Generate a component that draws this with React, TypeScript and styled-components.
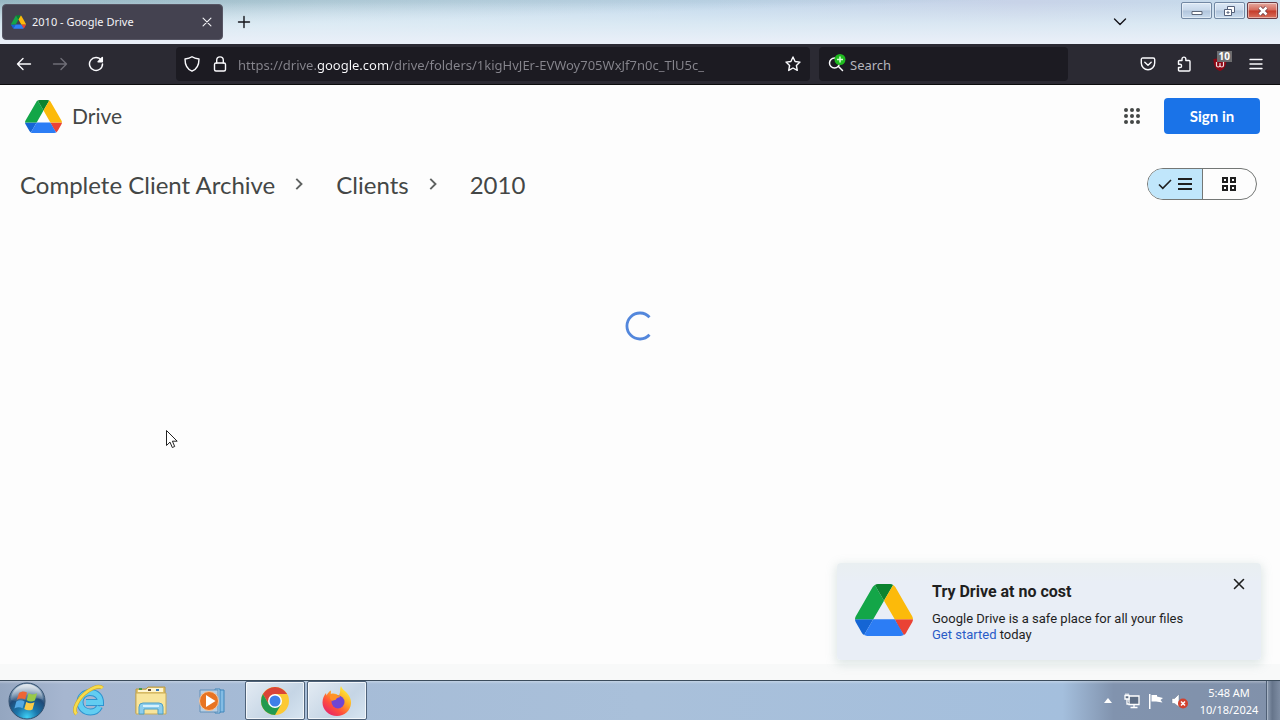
import React from "react";
import styled, { createGlobalStyle } from "styled-components";

const uiFont = `"Noto Sans", "Open Sans", sans-serif`;
const brandFont = `Lato, "Open Sans", sans-serif`;

const GlobalStyle = createGlobalStyle`
  *, *::before, *::after { box-sizing: border-box; }
  body { margin: 0; background: #fdfdfd; font-family: Roboto, sans-serif; }
  button { border: 0; padding: 0; background: none; color: inherit; font: inherit; cursor: default; }
  svg { display: block; flex: none; }
`;

const Screen = styled.div`
  display: flex;
  flex-direction: column;
  min-height: 100vh;
`;

/* Window title bar */
const TitleBar = styled.div`
  display: flex;
  align-items: flex-start;
  height: 44px;
  padding: 0 2px;
  background:
    linear-gradient(to bottom, rgba(228, 239, 247, 0) 5%, rgba(225, 238, 246, 0.75) 55%, #e9eff8 95%),
    linear-gradient(to bottom right, rgba(120, 160, 172, 0.6), rgba(120, 160, 172, 0) 40%),
    linear-gradient(to right, #c3d8e3, #d0e2ef 25%, #c4d9ec 55%, #c8d3e8 80%, #c6dcec);
`;

const Tab = styled.div`
  display: flex;
  align-items: center;
  width: 221px;
  height: 36px;
  margin-top: 4px;
  padding: 0 6px 0 8px;
  border: 1px solid #575664;
  border-radius: 4px;
  background: #444250;
  color: #f3f3f6;
`;

const TabTitle = styled.span`
  flex: 1;
  padding-left: 6px;
  font: 11px/16px ${uiFont};
`;

const IconButton = styled.button<{ $width?: number; $height?: number }>`
  display: flex;
  flex: none;
  align-items: center;
  justify-content: center;
  width: ${(p) => p.$width ?? 36}px;
  height: ${(p) => p.$height ?? 32}px;
`;

const TabTools = styled.div`
  display: flex;
  flex: 1;
  align-items: center;
  justify-content: space-between;
  height: 44px;
  padding: 0 43px 0 3px;
  color: #15141a;
`;

const WindowButtons = styled.div`
  display: flex;
  gap: 2px;
  padding-top: 2px;
`;

const WindowButton = styled.button<{ $close?: boolean }>`
  display: flex;
  align-items: center;
  justify-content: center;
  width: 31px;
  height: 17px;
  border: 1px solid ${(p) => (p.$close ? "#6b3a42" : "#7288a3")};
  border-radius: 2px;
  background: ${(p) =>
    p.$close
      ? "linear-gradient(#e5aaa0, #d5695a 48%, #c53a28 52%, #d9705c)"
      : "linear-gradient(#dce9f6, #c8d8ea 48%, #b1c5dc 52%, #c9dcee)"};
  box-shadow: inset 0 0 0 1px rgba(255, 255, 255, 0.45);
`;

/* Browser toolbar */
const Toolbar = styled.nav`
  display: flex;
  align-items: center;
  height: 41px;
  padding: 0 6px;
  border-bottom: 1px solid #0c0c0d;
  background: #2b2a33;
  color: #fbfbfe;
`;

const NavButtons = styled.div`
  display: flex;
  margin-right: 62px;
`;

const Field = styled.div`
  display: flex;
  align-items: center;
  height: 34px;
  border-radius: 4px;
  background: #1c1b22;
`;

const AddressField = styled(Field)`
  flex: 1;
  min-width: 0;
  padding: 0 3px 0 2px;
`;

const SearchField = styled(Field)`
  width: 249px;
  margin: 0 62px 0 9px;
  padding-left: 9px;
`;

const TextInput = styled.input`
  flex: 1;
  min-width: 0;
  height: 28px;
  padding: 2px 0 0 4px;
  border: 0;
  outline: 0;
  background: none;
  color: #fbfbfe;
  font: 13px/20px ${uiFont};
  &::placeholder { color: #b5b5bc; opacity: 1; }
`;

/* The host name is brighter than the rest of the address. */
const AddressInput = styled(TextInput)`
  background: linear-gradient(to right, #86858d 82px, #fbfbfe 82px, #fbfbfe 154px, #86858d 154px);
  background-clip: text;
  -webkit-background-clip: text;
  color: transparent;
`;

const Extension = styled(IconButton)`
  position: relative;
`;

const Badge = styled.span`
  position: absolute;
  top: 3px;
  right: 6px;
  padding: 0 2px;
  background: #6d6d6f;
  color: #fff;
  font: bold 10px/11px ${uiFont};
`;

/* Drive page */
const Page = styled.main`
  position: relative;
  display: flex;
  flex: 1;
  flex-direction: column;
  background: linear-gradient(to top, #f8f9f9 16px, #fdfdfd 16px);
`;

const Header = styled.header`
  display: flex;
  align-items: center;
  height: 62px;
  padding: 0 20px 0 25px;
`;

const Brand = styled.a`
  display: flex;
  align-items: center;
  gap: 10px;
  color: #444746;
  font: 21px/28px ${brandFont};
  text-decoration: none;
`;

const HeaderActions = styled.div`
  display: flex;
  align-items: center;
  gap: 14px;
  margin-left: auto;
`;

const SignIn = styled.a`
  width: 96px;
  border-radius: 4px;
  background: #1a73e8;
  color: #fff;
  font: bold 15px/36px ${brandFont};
  text-align: center;
  text-decoration: none;
`;

const PathBar = styled.div`
  display: flex;
  align-items: center;
  justify-content: space-between;
  height: 74px;
  padding: 0 23px 0 20px;
`;

const Crumbs = styled.ol`
  display: flex;
  align-items: center;
  margin: 0;
  padding: 2px 0 0;
  list-style: none;
`;

const Crumb = styled.li`
  display: flex;
  align-items: center;
  color: #444746;
  font: 24px/32px ${brandFont};
  a { color: inherit; text-decoration: none; }
  svg { margin: 0 25px 2px 12px; }
`;

const ViewToggle = styled.div`
  display: flex;
  height: 32px;
  overflow: hidden;
  border: 1px solid #747775;
  border-radius: 16px;
  color: #1f1f1f;
`;

const ViewOption = styled.button<{ $selected?: boolean }>`
  display: flex;
  align-items: center;
  justify-content: center;
  gap: 6px;
  width: ${(p) => (p.$selected ? 55 : 53)}px;
  padding-right: 1px;
  border-right: ${(p) => (p.$selected ? "1px solid #747775" : "0")};
  background: ${(p) => (p.$selected ? "#c0e6fb" : "transparent")};
`;

const Loading = styled.div`
  display: flex;
  justify-content: center;
  padding: 90px 2px 0 0;
`;

const Toast = styled.aside`
  position: absolute;
  right: 19px;
  bottom: 20px;
  display: flex;
  width: 424px;
  padding: 13px 14px 17px 18px;
  border-radius: 4px;
  background: linear-gradient(#e9eff1, #e9eef6 20%, #e9eef6);
  box-shadow: 0 3px 10px 2px rgba(150, 180, 175, 0.28);
  color: #1f1f1f;
`;

const ToastText = styled.div`
  flex: 1;
  padding: 6px 0 0 19px;
  h2 { margin: 0 0 9px; font: bold 16px/20px Roboto, sans-serif; }
  p { margin: 0; font: 13px/16px Roboto, sans-serif; }
  a { color: #2a5bc7; text-decoration: none; }
`;

const LogoSlot = styled.div`
  padding-top: 8px;
`;

const Pointer = styled.svg`
  position: absolute;
  top: 344px;
  left: 165px;
`;

/* Taskbar */
const Taskbar = styled.footer`
  display: flex;
  height: 40px;
  border-top: 1px solid #3b4c5c;
  background:
    linear-gradient(to bottom, rgba(255, 255, 255, 0.3), rgba(255, 255, 255, 0) 3px),
    linear-gradient(to right, #94a6c0, #a6b6d0 5%, #a5bbd6 20%, #a9c0da 50%, #a4bfdd 83%, #8193ae 87%, #8191aa);
`;

const Start = styled(IconButton)`
  margin-right: 5px;
`;

const Tasks = styled.div`
  display: flex;
  gap: 2px;
`;

const Task = styled.button<{ $open?: boolean }>`
  display: flex;
  align-items: center;
  justify-content: center;
  width: 60px;
  height: 39px;
  border: 1px solid ${(p) => (p.$open ? "#4e6279" : "transparent")};
  border-radius: 2px;
  background: ${(p) => (p.$open ? "linear-gradient(135deg, #e3ebf3, #c5d5e5 60%, #d7e5f1)" : "none")};
  box-shadow: ${(p) => (p.$open ? "inset 0 0 0 1px rgba(255, 255, 255, 0.7)" : "none")};
`;

const Tray = styled.div`
  display: flex;
  align-items: center;
  margin-left: auto;
  color: #fff;
`;

const Clock = styled.time`
  width: 70px;
  margin: 0 2px;
  font: 11px/17px ${uiFont};
  text-align: center;
`;

const ShowDesktop = styled.button`
  width: 14px;
  height: 39px;
  border-left: 1px solid #4f5f75;
  background: linear-gradient(to right, #8e9db2, #66758b 40%, #7e8da3);
  box-shadow: inset 1px 0 0 #a7b4c5;
`;

const DriveLogo = ({ width, height }: { width: number; height: number }) => (
  <svg width={width} height={height} viewBox="0 0 87.3 78" aria-hidden="true">
    <path d="m6.6 66.85 3.85 6.65c.8 1.4 1.95 2.5 3.3 3.3l13.75-23.8h-27.5c0 1.55.4 3.1 1.2 4.5z" fill="#1565d4" />
    <path d="m43.65 25-13.75-23.8c-1.35.8-2.5 1.9-3.3 3.3l-25.4 44a9.06 9.06 0 0 0-1.2 4.5h27.5z" fill="#13a648" />
    <path d="m73.55 76.8c1.35-.8 2.5-1.9 3.3-3.3l1.6-2.75 7.65-13.25c.8-1.4 1.2-2.95 1.2-4.5h-27.5l5.85 11.5z" fill="#ea4335" />
    <path d="m43.65 25 13.75-23.8c-1.35-.8-2.9-1.2-4.5-1.2h-18.5c-1.6 0-3.15.45-4.5 1.2z" fill="#0b832f" />
    <path d="m59.8 53h-32.3l-13.75 23.8c1.35.8 2.9 1.2 4.5 1.2h50.8c1.6 0 3.15-.45 4.5-1.2z" fill="#2c7df5" />
    <path d="m73.4 26.5-12.7-22c-.8-1.4-1.95-2.5-3.3-3.3l-13.75 23.8 16.15 28h27.45c0-1.55-.4-3.1-1.2-4.5z" fill="#fcba0a" />
  </svg>
);

type StrokeProps = { size?: number; width?: number; color?: string; children: React.ReactNode };
const Stroke = ({ size = 16, width = 1.4, color = "currentColor", children }: StrokeProps) => (
  <svg width={size} height={size} viewBox="0 0 16 16" fill="none" stroke={color} strokeWidth={width} strokeLinecap="round" strokeLinejoin="round" aria-hidden="true">
    {children}
  </svg>
);

const Chevron = () => (
  <svg width="24" height="24" viewBox="0 0 24 24" fill="none" stroke="#5f6261" strokeWidth="1.9" aria-hidden="true">
    <path d="m9.3 6.8 5.2 5.2-5.2 5.2" />
  </svg>
);

const StartOrb = () => (
  <svg width="38" height="38" viewBox="0 0 38 38" aria-hidden="true">
    <defs>
      <radialGradient id="orb" cx="50%" cy="95%" r="85%">
        <stop offset="0" stopColor="#3fd0f5" />
        <stop offset=".35" stopColor="#1b77ac" />
        <stop offset=".7" stopColor="#1f4a78" />
        <stop offset="1" stopColor="#8aa4bd" />
      </radialGradient>
      <linearGradient id="gloss" x1="0" y1="0" x2="0" y2="1">
        <stop offset="0" stopColor="#fff" stopOpacity=".75" />
        <stop offset="1" stopColor="#fff" stopOpacity=".1" />
      </linearGradient>
    </defs>
    <circle cx="19" cy="19" r="18" fill="url(#orb)" stroke="#34506e" />
    <path d="M3 18a16 16 0 0 1 32 0c-9-5-22 4-32 0z" fill="url(#gloss)" />
    <path d="M11 11c3-2 5-2 8-.4l-1.800 7c-3-1.600-5.500-1.500-8.400.2z" fill="#ee6535" />
    <path d="M20.500 11.300c3 1.500 5.500 1.400 8.600 0l-2.200 7.200c-3 1.500-5.300 1.300-8.200-.2z" fill="#98c94a" />
    <path d="M8.300 19.600c3-1.700 5.300-1.600 8.300-.2l-2 6.800c-2.800-1.300-5.200-1.200-8.200.2z" fill="#53a8e4" />
    <path d="M18.200 20c3 1.500 5.300 1.600 8.300.2l-2 7.200c-3 1.400-5.300 1.200-8.200-.4z" fill="#fbcb46" />
  </svg>
);

const ExplorerE = () => (
  <svg width="34" height="34" viewBox="0 0 34 34" fill="none" aria-hidden="true">
    <path d="M27.500 22.500C25.800 26 22.500 28 18.500 28C12.500 28 8 23.800 8 18C8 12.500 12.500 8.500 18 8.500C24.500 8.500 28.500 12.500 28.500 18.500H14" stroke="#2f93cf" strokeWidth="7" />
    <path d="M27.500 22.500C25.800 26 22.500 28 18.500 28C12.500 28 8 23.800 8 18C8 12.500 12.500 8.500 18 8.500C24.500 8.500 28.500 12.500 28.500 18.500H14" stroke="#62cdf1" strokeWidth="5" />
    <path d="M4.500 30C0 26 6 14 16 7c6-4 12-5.500 14.500-3" stroke="#cfa92a" strokeWidth="3.800" />
    <path d="M4.500 30C0 26 6 14 16 7c6-4 12-5.500 14.500-3" stroke="#f7dc4d" strokeWidth="2.600" />
  </svg>
);

const FolderIcon = () => (
  <svg width="34" height="32" viewBox="0 0 34 32" aria-hidden="true">
    <path d="M2 4h10l2-2h17v26H2z" fill="#e5c96c" stroke="#b7984a" />
    <path d="M4 5h8l2-2h15v4H4z" fill="#fff5cf" />
    <path d="M5 3h3v2H5z" fill="#479b4c" /><path d="M14 4h3v2h-3z" fill="#6b513a" /><path d="M22 4h3v2h-3z" fill="#3b7ab8" />
    <path d="M2 8h30v21H2z" fill="#f8e59c" stroke="#c9ab59" />
    <path d="M5 29v-7q0-4 4-4h16q4 0 4 4v7h-5v-5H10v5z" fill="#8ccdec" stroke="#4f9fc6" />
    <path d="M9 21h16" stroke="#d7f1fc" strokeWidth="2" />
  </svg>
);

const MediaIcon = () => (
  <svg width="30" height="28" viewBox="0 0 30 28" aria-hidden="true">
    <path d="M21 3h5v22h-5z" fill="#83bce4" stroke="#3e86bb" />
    <path d="M17 2h5v24h-5z" fill="#b9dcf3" stroke="#3e86bb" />
    <path d="M2 3h18v22H2z" fill="#b7cfe5" stroke="#6390b8" />
    <circle cx="11" cy="14" r="9.500" fill="#e77423" stroke="#f6c59c" />
    <path d="m8 8 9.500 6L8 20z" fill="#fff" />
  </svg>
);

const ChromeIcon = () => (
  <svg width="30" height="30" viewBox="0 0 30 30" aria-hidden="true">
    <circle cx="15" cy="15" r="14" fill="#fcc934" />
    <path d="M2.900 8A14 14 0 0 1 27.100 8H15L9 18.500z" fill="#da4437" />
    <path d="M2.900 8A14 14 0 0 0 15 29l6-10.500H9z" fill="#229a50" />
    <circle cx="15" cy="15" r="7" fill="#fff" />
    <circle cx="15" cy="15" r="5.500" fill="#3f7fe8" />
  </svg>
);

const FirefoxIcon = () => (
  <svg width="32" height="32" viewBox="0 0 32 32" aria-hidden="true">
    <defs>
      <linearGradient id="fox" x1=".85" y1=".1" x2=".2" y2=".95">
        <stop offset="0" stopColor="#fff03d" />
        <stop offset=".35" stopColor="#ffab22" />
        <stop offset=".7" stopColor="#ff4d3d" />
        <stop offset="1" stopColor="#e62669" />
      </linearGradient>
    </defs>
    <path d="M20 1c1 3 3 4 5 6 3 3 5.500 7 5 11.500C29.300 26 23.500 31 16 31 8 31 1.500 25 1.500 17.500c0-4 1.500-7 3.500-9.500l.5 2.500C7 8 8 6.500 10 5.500L9.800 9c3-1 6 0 7.700 1.500C20 8.500 18.500 4 20 1z" fill="url(#fox)" />
    <circle cx="17" cy="17" r="6.500" fill="#7046d3" />
    <path d="M9.500 10c2.500-1.500 5-.8 6.500.6 2 0 3 .6 3.300 1.500-2.600.4-4 1.200-4.500 2.700-2 .6-2.800 1.200-4.500.6-1.500-1.200-1.800-3.400-.8-5.400z" fill="#ff9126" />
  </svg>
);

const appDots = [3, 9, 15];

export default function App() {
  return (
    <Screen>
      <GlobalStyle />
      <TitleBar>
        <Tab>
          <DriveLogo width={15} height={14} />
          <TabTitle>2010 - Google Drive</TabTitle>
          <IconButton $width={18} $height={18} aria-label="Close tab">
            <Stroke size={14} width={1.3}><path d="m3.500 3.500 9 9m0-9-9 9" /></Stroke>
          </IconButton>
        </Tab>
        <TabTools>
          <IconButton aria-label="New tab"><Stroke><path d="M8 2.500v11M2.500 8h11" /></Stroke></IconButton>
          <IconButton aria-label="List all tabs"><Stroke><path d="m2.500 5 5.500 5.500L13.500 5" /></Stroke></IconButton>
        </TabTools>
        <WindowButtons>
          <WindowButton aria-label="Minimize">
            <svg width="12" height="8" viewBox="0 0 12 8"><path d="M1 4.500h10v3H1z" fill="#fff" stroke="#5b6577" /></svg>
          </WindowButton>
          <WindowButton aria-label="Restore">
            <svg width="13" height="12" viewBox="0 0 13 12" fill="#fff" stroke="#55617a"><path d="M4.500 1.500h7v6h-7z" /><path d="M1.500 4.500h7v6h-7z" /><path d="M4 7h2v1H4z" /></svg>
          </WindowButton>
          <WindowButton aria-label="Close" $close>
            <svg width="12" height="10" viewBox="0 0 12 10" fill="none"><path d="m2.500 1.500 7 7m0-7-7 7" stroke="#6b3a42" strokeWidth="4" /><path d="m2.500 1.500 7 7m0-7-7 7" stroke="#fff" strokeWidth="2.500" /></svg>
          </WindowButton>
        </WindowButtons>
      </TitleBar>

      <Toolbar aria-label="Browser">
        <NavButtons>
          <IconButton aria-label="Back"><Stroke><path d="M14.500 8h-13M7 2.500 1.500 8 7 13.500" /></Stroke></IconButton>
          <IconButton aria-label="Forward"><Stroke color="#6f6e77"><path d="M1.500 8h13M9 2.500 14.500 8 9 13.500" /></Stroke></IconButton>
          <IconButton aria-label="Reload"><Stroke width={1.500}><path d="M13.300 4.200A6.500 6.500 0 1 0 14.500 8" /><path d="M14.300 1.500v4.200h-4.200z" fill="currentColor" /></Stroke></IconButton>
        </NavButtons>
        <AddressField>
          <IconButton $width={28} aria-label="Tracking protection">
            <Stroke><path d="M8 .8c2 1.500 4.500 2 7 2.200 0 5.500-1.500 10-7 12.200C2.500 13 1 8.500 1 3c2.500-.2 5-.7 7-2.200z" /></Stroke>
          </IconButton>
          <IconButton $width={28} aria-label="Site information">
            <Stroke><rect x="2.500" y="7" width="11" height="8" rx="1.500" /><path d="M4.700 7V4.200a3.300 3.300 0 0 1 6.600 0V7" /></Stroke>
          </IconButton>
          <AddressInput aria-label="Address" defaultValue="https://drive.google.com/drive/folders/1kigHvJEr-EVWoy705WxJf7n0c_TlU5c_" />
          <IconButton $width={28} aria-label="Bookmark this page">
            <Stroke><path d="m8 1 2.100 4.500 4.900.6-3.600 3.400.9 4.900L8 12l-4.300 2.400.9-4.900L1 6.100l4.900-.6z" /></Stroke>
          </IconButton>
        </AddressField>
        <SearchField>
          <svg width="18" height="20" viewBox="0 0 18 20" fill="none" aria-hidden="true">
            <circle cx="6.500" cy="9" r="5" stroke="#fbfbfe" strokeWidth="1.500" />
            <path d="m10.500 12.500 4 4" stroke="#fbfbfe" strokeWidth="1.500" strokeLinecap="round" />
            <circle cx="12" cy="5.500" r="5.500" fill="#20bc20" />
            <path d="M12 2.500v6M9 5.500h6" stroke="#d8ffd8" strokeWidth="1.500" />
          </svg>
          <TextInput aria-label="Search the web" placeholder="Search" />
        </SearchField>
        <IconButton aria-label="Save to Pocket">
          <Stroke><path d="M2.800 2h10.400q1.500 0 1.500 1.500V7a6.700 6.700 0 0 1-13.400 0V3.500Q1.300 2 2.800 2z" /><path d="M4.800 6.200 8 9.200l3.200-3" /></Stroke>
        </IconButton>
        <IconButton aria-label="Extensions">
          <Stroke><path d="M6 4.500V3a1.900 1.900 0 0 1 3.800 0v1.500H13q1 0 1 1V14q0 1-1 1H3.500q-1 0-1-1v-2.500H4a1.600 1.600 0 0 0 0-3.200H2.500V5.500q0-1 1-1z" /></Stroke>
        </IconButton>
        <Extension aria-label="Content blocker">
          <svg width="16" height="16" viewBox="0 0 16 16" aria-hidden="true">
            <path d="M8 1c2 1.300 4 1.800 6.500 2 0 6-1.500 10-6.500 12C3 13 1.500 9 1.500 3 4 2.800 6 2.300 8 1z" fill="#8d0714" />
            <path d="M4.500 6v3.500q0 1.500 1.700 1.500T8 9.500V7v2.500Q8 11 9.700 11t1.800-1.500V6" fill="none" stroke="#f3dfe1" strokeWidth="1.200" />
          </svg>
          <Badge>10</Badge>
        </Extension>
        <IconButton aria-label="Menu"><Stroke><path d="M2 3.500h12M2 8h12M2 12.500h12" /></Stroke></IconButton>
      </Toolbar>

      <Page>
        <Header>
          <Brand href="#drive"><DriveLogo width={37} height={33} />Drive</Brand>
          <HeaderActions>
            <IconButton aria-label="Google apps">
              <svg width="18" height="18" viewBox="0 0 18 18" fill="#444746">
                {appDots.map((y) => appDots.map((x) => <circle key={`${x}-${y}`} cx={x} cy={y} r="2" />))}
              </svg>
            </IconButton>
            <SignIn href="#signin">Sign in</SignIn>
          </HeaderActions>
        </Header>
        <PathBar>
          <Crumbs>
            <Crumb><a href="#archive">Complete Client Archive</a><Chevron /></Crumb>
            <Crumb><a href="#clients">Clients</a><Chevron /></Crumb>
            <Crumb aria-current="page">2010</Crumb>
          </Crumbs>
          <ViewToggle role="group" aria-label="Layout">
            <ViewOption $selected aria-pressed="true" aria-label="List layout">
              <svg width="14" height="12" viewBox="0 0 14 12" fill="none" stroke="#1f1f1f" strokeWidth="1.600"><path d="m1 6.500 3.800 3.800L13 2" /></svg>
              <svg width="14" height="14" viewBox="0 0 14 14" stroke="#1f1f1f" strokeWidth="2"><path d="M0 2h14M0 7h14M0 12h14" /></svg>
            </ViewOption>
            <ViewOption aria-pressed="false" aria-label="Grid layout">
              <svg width="16" height="16" viewBox="0 0 16 16" fill="none" stroke="#1f1f1f" strokeWidth="2">
                <path d="M2 2h4v4H2zM10 2h4v4h-4zM2 10h4v4H2zM10 10h4v4h-4z" />
              </svg>
            </ViewOption>
          </ViewToggle>
        </PathBar>
        <Loading role="status" aria-label="Loading">
          <svg width="30" height="30" viewBox="0 0 30 30" fill="none" stroke="#5387dc" strokeWidth="2.800">
            <path d="M25.500 6.200A13 13 0 1 0 25.500 23.800" />
          </svg>
        </Loading>
        <Pointer width="14" height="20" viewBox="0 0 14 20" aria-hidden="true">
          <path d="M1.500 1.500v15l3.500-3.400 2.300 5.400 2.400-1-2.300-5.300h4.800z" fill="#fff" stroke="#222" />
        </Pointer>
        <Toast>
          <LogoSlot><DriveLogo width={58} height={52} /></LogoSlot>
          <ToastText>
            <h2>Try Drive at no cost</h2>
            <p>Google Drive is a safe place for all your files<br /><a href="#start">Get started</a> today</p>
          </ToastText>
          <IconButton $width={16} $height={16} aria-label="Dismiss">
            <Stroke width={1.600}><path d="m3.500 3.500 9 9m0-9-9 9" /></Stroke>
          </IconButton>
        </Toast>
      </Page>

      <Taskbar>
        <Start $width={54} $height={39} aria-label="Start"><StartOrb /></Start>
        <Tasks>
          <Task aria-label="Internet Explorer"><ExplorerE /></Task>
          <Task aria-label="Windows Explorer"><FolderIcon /></Task>
          <Task aria-label="Media Player"><MediaIcon /></Task>
          <Task $open aria-label="Chrome"><ChromeIcon /></Task>
          <Task $open aria-label="Firefox"><FirefoxIcon /></Task>
        </Tasks>
        <Tray>
          <IconButton $width={24} aria-label="Show hidden icons">
            <svg width="8" height="5" viewBox="0 0 8 5"><path d="M0 5 4 0l4 5z" fill="#fff" /></svg>
          </IconButton>
          <IconButton $width={24} aria-label="Network">
            <svg width="16" height="16" viewBox="0 0 16 16" fill="#5e6e85" stroke="#fff" strokeWidth="1.300"><path d="M5 3h10v8.500H5zM10 11.500V14M6.500 14.500h7" /><path d="M1 2.500h4V6H1zM2 .5v2M4 .5v2M3 6v5h2" /></svg>
          </IconButton>
          <IconButton $width={24} aria-label="Action Center">
            <svg width="16" height="16" viewBox="0 0 16 16" fill="#fff"><path d="M1 1h1.500v15H1zM3.500 2H9v1.500l6 1.500-2.500 2 2 2.500L8 8.500H3.500z" /></svg>
          </IconButton>
          <IconButton $width={24} aria-label="Volume muted">
            <svg width="18" height="16" viewBox="0 0 18 16" fill="none"><path d="M1 5.500h2.500L8 1v13L3.500 10.500H1z" fill="#fff" stroke="#66758b" strokeWidth=".5" /><circle cx="12" cy="10.500" r="5" fill="#d2412e" /><path d="m10 8.500 4 4m0-4-4 4" stroke="#fff" strokeWidth="1.500" /></svg>
          </IconButton>
          <Clock>5:48 AM<br />10/18/2024</Clock>
          <ShowDesktop aria-label="Show desktop" />
        </Tray>
      </Taskbar>
    </Screen>
  );
}
